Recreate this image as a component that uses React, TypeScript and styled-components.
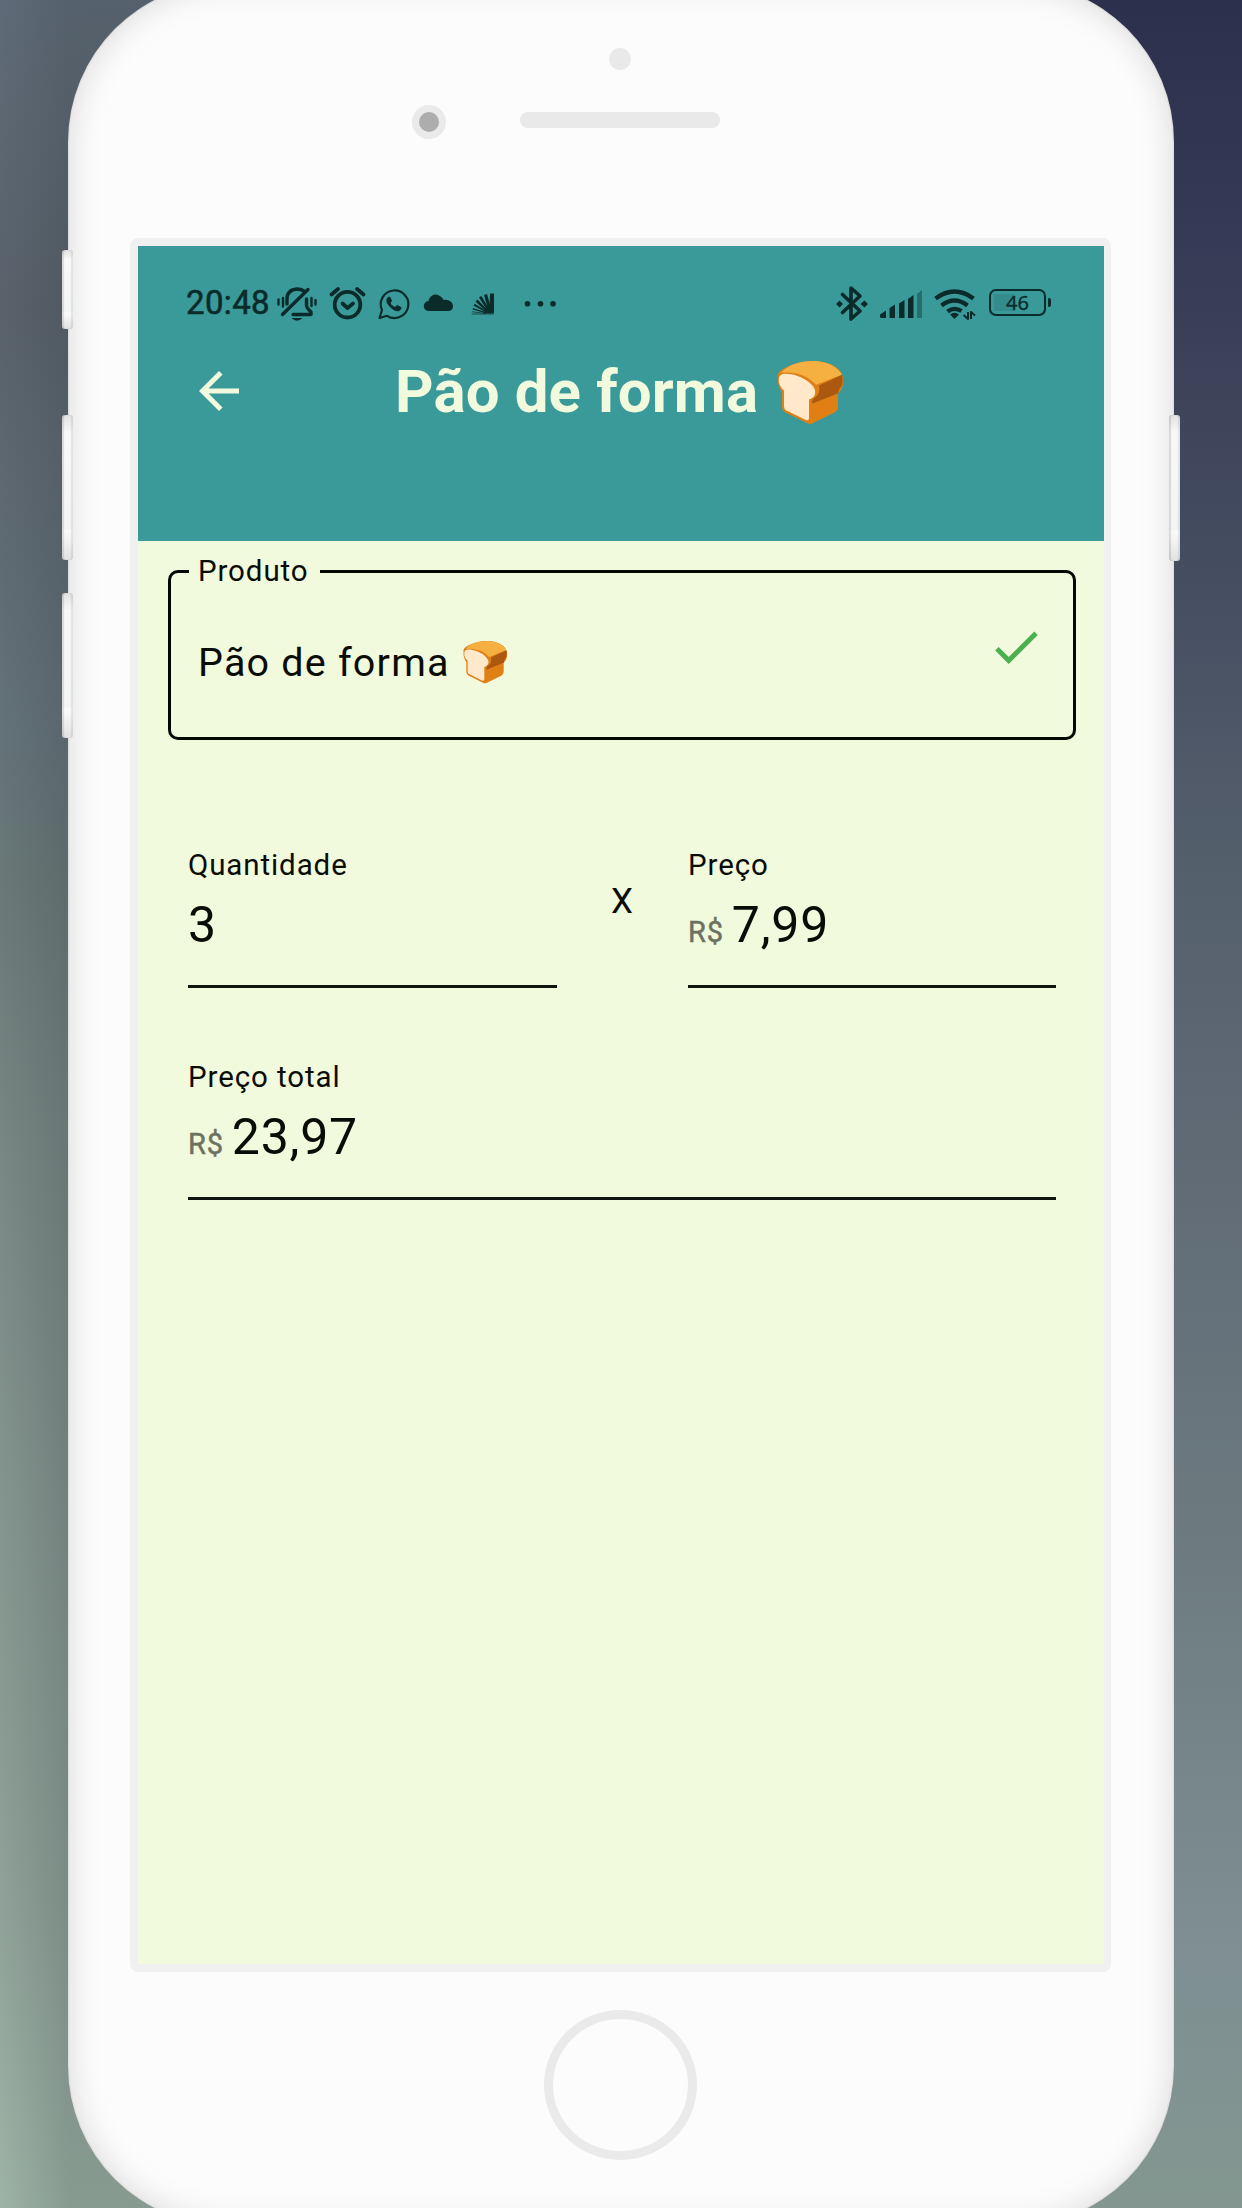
import React from 'react';
import styled, { createGlobalStyle } from 'styled-components';

const ink = '#0b2b2b';
const cream = '#f1fadc';

const Global = createGlobalStyle`
  * { box-sizing: border-box; }
  body { margin: 0; }
`;

const Stage = styled.main`
  width: 1242px;
  height: 2208px;
  overflow: hidden;
  display: flex;
  align-items: center;
  padding-left: 68px;
  font-family: Roboto, 'Noto Sans', sans-serif;
  background:
    linear-gradient(180deg, #2d304c 0%, #373a56 11%, #3d445a 18%, #444c60 25%, #545f6c 39%, #616c77 54%, #6b797f 68%, #7e8e92 88%, #839790 100%) right / 50% 100% no-repeat,
    linear-gradient(90deg, transparent 0, rgba(45, 55, 60, 0.2) 68px, rgba(45, 55, 60, 0.22) 100%) left / 50% 100% no-repeat,
    linear-gradient(180deg, #5f6b78 0%, #59626b 14%, #64727a 33%, #6a7977 40%, #788784 52%, #84948e 68%, #8fa198 86%, #9eb4a6 100%);
`;

const Phone = styled.section`
  position: relative;
  flex: none;
  width: 1106px;
  height: 2244px;
  border-radius: 160px;
  background: #fcfcfc;
  box-shadow: inset 0 0 34px rgba(0, 0, 0, 0.15), inset 0 0 2px rgba(0, 0, 0, 0.2);
  display: flex;
  flex-direction: column;
  align-items: center;
`;

const SideKey = styled.i<{ $side: 'left' | 'right'; $top: number; $height: number }>`
  position: absolute;
  ${(p) => p.$side}: -6px;
  top: ${(p) => p.$top}px;
  width: 11px;
  height: ${(p) => p.$height}px;
  border-radius: 3px;
  background: linear-gradient(180deg, #e2e2e2, #f8f8f8 12%, #f3f4f5 78%, #fafafa 80%, #e2e2e2);
  box-shadow: inset 2px 0 1px rgba(0, 0, 0, 0.12), inset -2px 0 1px rgba(0, 0, 0, 0.08);
`;

const TopBezel = styled.div`
  width: 100%;
  height: 256px;
  padding: 66px 2px 0 0;
  display: flex;
  flex-direction: column;
  align-items: center;
  gap: 35px;
`;

const Sensor = styled.i`
  width: 22px;
  height: 22px;
  border-radius: 50%;
  background: #e9e9e9;
`;

const SpeakerRow = styled.div`
  display: flex;
  align-items: center;
  gap: 74px;
  margin-right: 108px;
`;

const Camera = styled.i`
  width: 34px;
  height: 34px;
  border-radius: 50%;
  border: 7px solid #eaeaea;
  background: #adadad;
`;

const Speaker = styled.i`
  width: 200px;
  height: 16px;
  margin-top: -4px;
  border-radius: 8px;
  background: #e9e9e9;
`;

const Screen = styled.div`
  width: 981px;
  height: 1734px;
  margin-right: 1px;
  border: 8px solid #f0f0f0;
  border-right-width: 7px;
  border-radius: 8px;
  background: ${cream};
  display: flex;
  flex-direction: column;
`;

const Header = styled.header`
  height: 295px;
  flex: none;
  background: #3a9a99;
`;

const StatusBar = styled.div`
  height: 104px;
  padding: 9px 53px 0 48px;
  display: flex;
  align-items: center;
  justify-content: space-between;
  color: ${ink};
`;

const StatusArt = styled.svg`
  display: block;
  flex: none;
`;

const StatusGroup = styled.div`
  display: flex;
  align-items: center;
`;

const Clock = styled.time`
  width: 86px;
  font-size: 33px;
  font-weight: 400;
  letter-spacing: 0.35px;
  line-height: 40px;
  -webkit-text-stroke: 0.6px ${ink};
`;

const TitleRow = styled.div`
  display: flex;
  align-items: center;
  height: 84px;
`;

const BackButton = styled.button`
  width: 60px;
  height: 60px;
  margin: 0 146px 3px 51px;
  padding: 0;
  border: 0;
  background: none;
`;

const Title = styled.h1`
  margin: 0;
  display: flex;
  align-items: center;
  gap: 19px;
  white-space: nowrap;
  color: ${cream};
  font-size: 60px;
  font-weight: 700;
  letter-spacing: 0.12px;
  line-height: 84px;
`;

const BreadArt = styled.svg`
  flex: none;
  margin-top: 1px;
`;

const Form = styled.div`
  padding: 14px 28px 0 30px;
`;

const Outlined = styled.fieldset`
  margin: 0;
  height: 185px;
  padding: 0 28px 0 18px;
  border: 3px solid #050805;
  border-radius: 10px;
  display: flex;
`;

const Legend = styled.legend`
  height: 32px;
  padding: 0 11px 0 9px;
  line-height: 32px;
  font-size: 29.5px;
  letter-spacing: 0.9px;
  color: #0a0c08;
`;

const ProductRow = styled.div`
  width: 100%;
  height: 150px;
  padding-left: 9px;
  display: flex;
  align-items: center;
  justify-content: space-between;
`;

const ProductValue = styled.div`
  display: flex;
  align-items: center;
  gap: 13px;
  font-size: 39.5px;
  letter-spacing: 1.2px;
  color: #0a0c08;
`;

const Check = styled.svg`
  margin-bottom: 31px;
`;

const Fields = styled.div`
  padding: 89px 18px 0 20px;
  display: grid;
  grid-template-columns: 369px 131px 368px;
  row-gap: 53px;
`;

const Field = styled.label<{ $wide?: boolean }>`
  grid-column: ${(p) => (p.$wide ? '1 / -1' : 'auto')};
  height: 159px;
  padding-top: 18px;
  border-bottom: 3px solid #10140e;
  display: flex;
  flex-direction: column;
  color: #0a0c08;
`;

const Caption = styled.span`
  font-size: 29.5px;
  line-height: 36px;
  letter-spacing: 0.9px;
`;

const Amount = styled.span`
  display: flex;
  align-items: baseline;
  gap: 8px;
  margin-top: 10px;
  font-size: 50px;
  letter-spacing: 0.8px;
  line-height: 64px;
`;

const Currency = styled.small`
  font-size: 29px;
  font-weight: 400;
  letter-spacing: 0.8px;
  color: #6d725f;
  -webkit-text-stroke: 0.5px #6d725f;
`;

const Times = styled.span`
  align-self: center;
  justify-self: center;
  margin: 0 1px 13px 0;
  font-size: 35px;
  line-height: 40px;
  color: #0a0c08;
`;

const Home = styled.i`
  width: 153px;
  height: 150px;
  margin: 38px 1px 0 0;
  border: 9px solid #eaeaea;
  border-radius: 50%;
`;

const Bread = ({ width, height }: { width: number; height: number }) => (
  <BreadArt width={width} height={height} viewBox="0 0 66 65" preserveAspectRatio="none">
    <path d="M1 17C-1 11 6 8 12 5C27-2 48-2 60 7C66 12 68 20 65 27C64 31 61 32 61 34V47Q61 50 58 52L36 63Q33 65 30 63L8 52Q5 50 5 47V32C2 27 0 22 1 17Z" fill="#e07f14" />
    <path d="M4 12C16-2 47-4 60 8Q64 11 65 14L39 24C32 16 20 10 4 12Z" fill="#f5b041" />
    <path d="M42 25L65 14Q67 24 62 29L61 33L36 43C34 44 35 38 38 37C42 34 43 30 42 25Z" fill="#ac5810" />
    <path d="M2 18C2 13 7 12 14 13.500C24 15 37 23 38 30C39 35 36 38 32 39V58Q32 61 29 60L9 50Q7 49 7 46V30C4 27 1 23 2 18Z" fill="#ffe9ca" />
  </BreadArt>
);

const LeftIcons = () => (
  <StatusArt width="290" height="40" viewBox="272 282 290 40" fill="none" stroke={ink} strokeWidth="3.4" strokeLinecap="round" strokeLinejoin="round">
    <path d="M282.500 313.500L308 288.500" />
    <path d="M287 303V298C287 291 291 288.500 297 288Q301 288 304 290" />
    <path d="M306.500 298V304Q306.500 307 311 311V313.500H293" />
    <path d="M278.500 298.500V303.500M283 297V305.500M311.500 297V305M315.500 299V303.500" strokeWidth="2.400" />
    <path d="M291.500 317H302.500Q297 322.500 291.500 317Z" fill={ink} stroke="none" />
    <circle cx="347.500" cy="303.700" r="12.800" strokeWidth="3.800" />
    <path d="M331.500 293.500L338 288M363.500 293.500L357 288M342.500 302.500L347.500 307L353 302.500" strokeWidth="3.800" />
    <path d="M379.500 317L382 309A13.800 13.800 0 1 1 387 314.800Z" strokeWidth="2.200" />
    <path d="M388 296.500C385.500 299 387 303 391 306.500C395.500 310.500 399.500 311 401 307.500C401.500 306 399.500 305.500 397 304.500L395 306.500C392.500 305.500 390.500 303.500 390 302L391.500 300L390 296.500Z" fill={ink} stroke={ink} strokeWidth="1" />
    <path d="M429 310A5 5 0 0 1 428.500 300C429.500 294 436 291.500 440 295Q443 297 443.500 299C449 298 453 301.500 453 305Q453 310 448 310Z" fill={ink} stroke="none" />
    <path d="M490 292.500H494V312.500H483L487 307.500L489.500 305Z" fill={ink} stroke="none" />
    <g fill={ink} stroke="none">
      <path d="M484 294L487 293L491 307L488 308Z" />
      <path d="M479 296.500L481.500 295L489 308L487 309Z" />
      <path d="M475.500 300.500L477.500 298.500L488 309.500L486 310.500Z" />
      <path d="M473.500 304.500L474.800 302.700L487 310.500L486 311.500Z" />
      <path d="M472.500 308.500L473 307L486 311.200L485.500 312.200Z" />
    </g>
    <path d="M472.500 310.800L485 312.300M472 313H493" strokeWidth=".7" />
    <g fill={ink} stroke="none"><circle cx="527.500" cy="302.700" r="2.800" /><circle cx="540.500" cy="302.700" r="2.800" /><circle cx="553" cy="302.700" r="2.800" /></g>
  </StatusArt>
);

const RadioIcons = () => (
  <StatusArt width="152" height="40" viewBox="834 282 152 40" fill="none" stroke={ink} strokeLinecap="round" strokeLinejoin="round">
    <path d="M843.500 293.500L861 310L852 318V287L861 295L843.500 311.500" strokeWidth="3.600" />
    <path d="M837 303L840.500 299.500L844 303L840.500 306.500ZM861.500 303L865.500 299.500L869 303L865.500 306.500Z" fill={ink} stroke="none" />
    <g fill={ink} stroke="none">
      <path d="M881 313.500L887 309.500V317H882.500Q881 317 881 315.500Z" />
      <path d="M890.500 307L896 303.500V317H890.500ZM900 302.500L905.500 299V317H900ZM909 298L914.500 294V317H909Z" />
      <path d="M918 293L923 289V317H918Z" opacity=".4" />
    </g>
    <path d="M936.500 297.500Q955.500 283.500 974.500 297.500M942.500 304.500Q955.500 294.500 968.500 304.500M948.500 310.500Q955.500 305.500 962.500 310" strokeWidth="4.400" strokeLinecap="butt" />
    <path d="M951 313.500Q955.500 310 960 313.500L955.500 318Z" fill={ink} stroke="none" />
    <path d="M969 311V318L964.500 314M972 318V311L976 314.500" strokeWidth="2" strokeLinecap="butt" />
  </StatusArt>
);

const Battery = styled.div`
  width: 57px;
  height: 27px;
  margin-left: 4px;
  padding: 3px 4px;
  border: 2.5px solid ${ink};
  border-radius: 7px;
  display: flex;
  align-items: center;
  justify-content: center;
  background: linear-gradient(#348b8b, #348b8b) 3px center / 20px 17px no-repeat;
  font-family: 'Noto Sans', sans-serif;
  font-size: 20px;
  line-height: 20px;
  -webkit-text-stroke: 0.3px ${ink};
`;

const BatteryTip = styled.i`
  width: 3px;
  height: 9px;
  margin-left: 2px;
  border-radius: 1px 2px 2px 1px;
  background: ${ink};
`;

export default function App() {
  return (
    <Stage>
      <Global />
      <Phone>
        <SideKey $side="left" $top={268} $height={79} />
        <SideKey $side="left" $top={433} $height={145} />
        <SideKey $side="left" $top={611} $height={145} />
        <SideKey $side="right" $top={433} $height={146} />
        <TopBezel>
          <Sensor />
          <SpeakerRow>
            <Camera />
            <Speaker />
          </SpeakerRow>
        </TopBezel>
        <Screen>
          <Header>
            <StatusBar>
              <StatusGroup>
                <Clock>20:48</Clock>
                <LeftIcons />
              </StatusGroup>
              <StatusGroup>
                <RadioIcons />
                <Battery>46</Battery>
                <BatteryTip />
              </StatusGroup>
            </StatusBar>
            <TitleRow>
              <BackButton aria-label="Voltar">
                <svg width="60" height="60" viewBox="0 0 24 24" fill={cream}><path d="M20 11H7.830l5.590-5.590L12 4l-8 8 8 8 1.410-1.410L7.830 13H20v-2z" /></svg>
              </BackButton>
              <Title>Pão de forma <Bread width={66} height={64} /></Title>
            </TitleRow>
          </Header>
          <Form>
            <Outlined>
              <Legend>Produto</Legend>
              <ProductRow>
                <ProductValue>Pão de forma <Bread width={44} height={43} /></ProductValue>
                <Check width="58" height="58" viewBox="0 0 24 24" fill="#4caf50"><path d="M9 16.170L4.830 12l-1.420 1.410L9 19 21 7l-1.410-1.410z" /></Check>
              </ProductRow>
            </Outlined>
            <Fields>
              <Field><Caption>Quantidade</Caption><Amount>3</Amount></Field>
              <Times>X</Times>
              <Field><Caption>Preço</Caption><Amount><Currency>R$</Currency>7,99</Amount></Field>
              <Field $wide><Caption>Preço total</Caption><Amount><Currency>R$</Currency>23,97</Amount></Field>
            </Fields>
          </Form>
        </Screen>
        <Home />
      </Phone>
    </Stage>
  );
}
